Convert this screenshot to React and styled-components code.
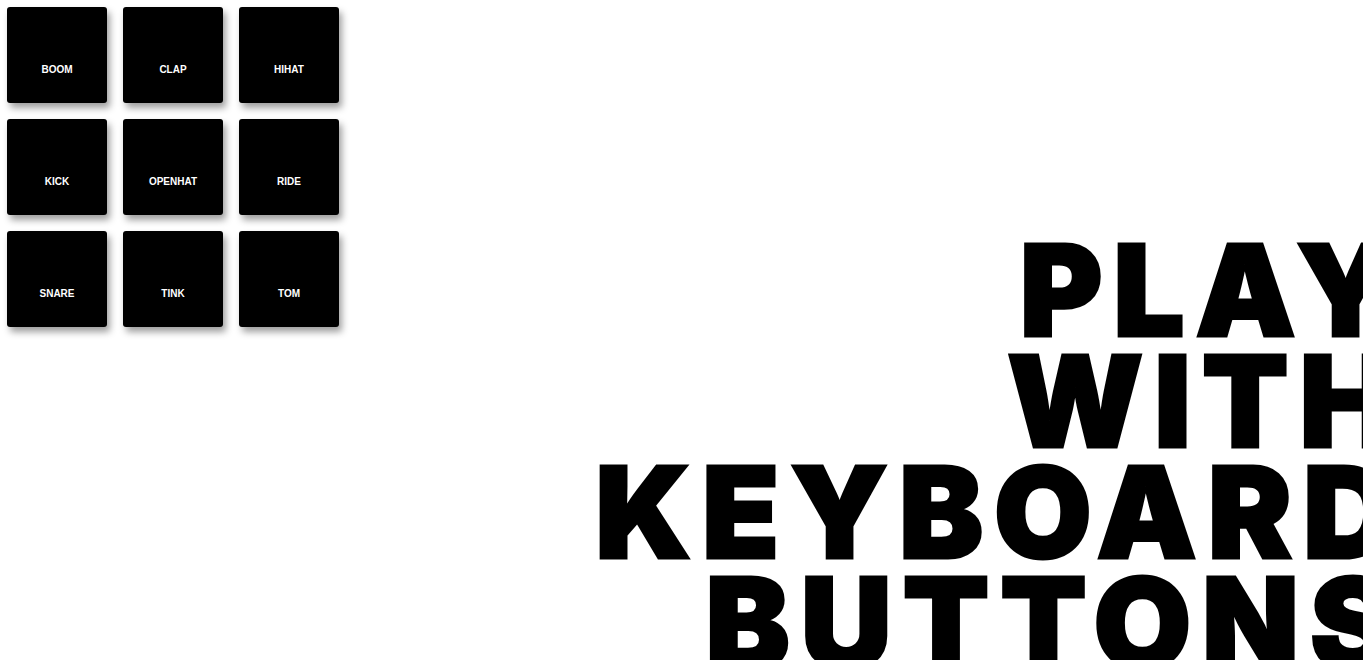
import React from 'react'
import styled, { createGlobalStyle } from 'styled-components'

const GlobalStyle = createGlobalStyle`
html, body {
  margin: 0;
  background: #fff;
  overflow: hidden;
}
`

const Page = styled.div`
display: flex;
align-items: flex-start;
width: 100vw;
height: 100vh;
overflow: hidden;
`

const Pads = styled.div`
display: grid;
grid-template-columns: repeat(3, 100px);
grid-auto-rows: 96px;
gap: 16px;
padding: 7px;
flex-shrink: 0;
`

const Key = styled.div`
display: flex;
align-items: center;
justify-content: center;
padding-top: 28px;
background: #000;
border-radius: 3px;
box-shadow: 3px 5px 7px rgba(0, 0, 0, 0.38);
color: #fff;
font-family: "Liberation Sans", Arial, sans-serif;
font-size: 10px;
font-weight: 700;
box-sizing: border-box;
`

const Title = styled.h1`
flex: 1;
margin: 235px -42px 0 0;
font-family: Inter, "Liberation Sans", sans-serif;
font-weight: 900;
font-size: 126px;
line-height: 111px;
letter-spacing: 11px;
-webkit-text-stroke: 3px #000;
text-align: right;
color: #000;
white-space: nowrap;
`

const sounds = ['boom', 'clap', 'hihat', 'kick', 'openhat', 'ride', 'snare', 'tink', 'tom']

const App = () => {
  return (
    <Page>
      <GlobalStyle />
      <Pads>
        {sounds.map(s => (
          <Key key={s}>{s.toUpperCase()}</Key>
        ))}
      </Pads>
      <Title>
        PLAY<br />
        WITH<br />
        KEYBOARD<br />
        BUTTONS
      </Title>
    </Page>
  )
}

export default App
